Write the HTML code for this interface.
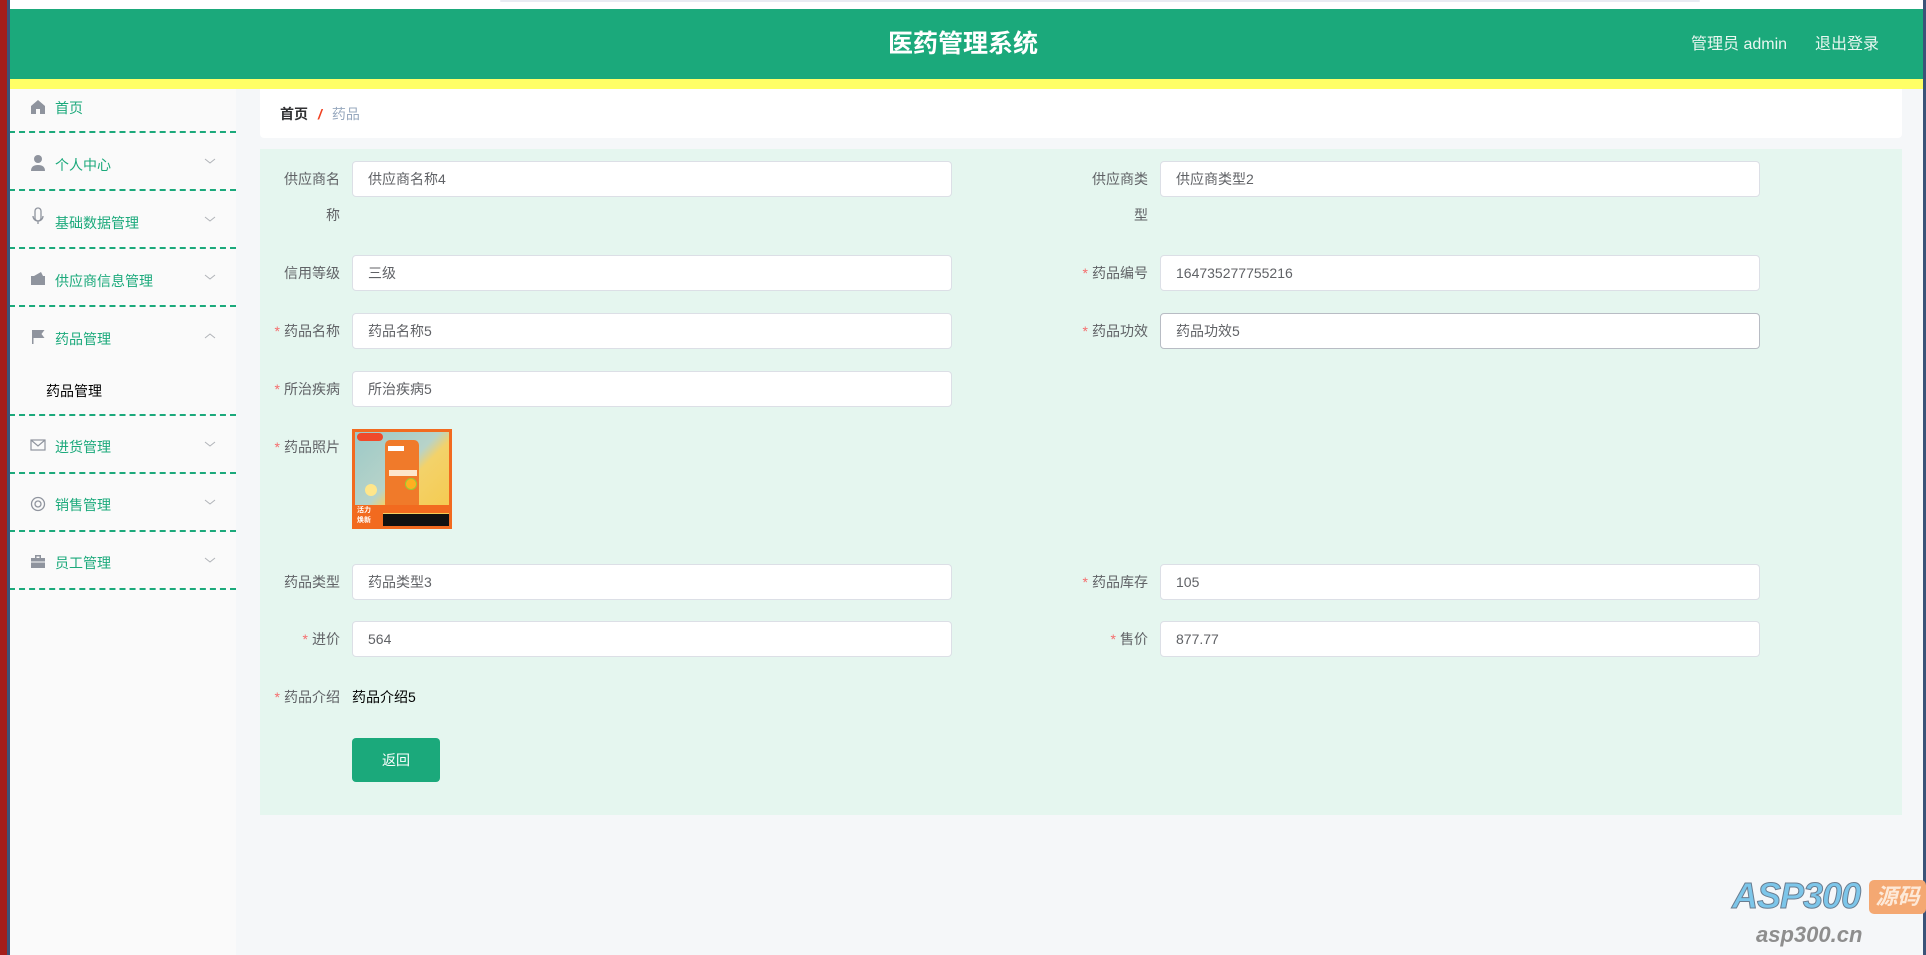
<!DOCTYPE html>
<html><head><meta charset="utf-8"><style>
*{margin:0;padding:0;box-sizing:border-box}
body{width:1926px;height:955px;overflow:hidden;background:#f5f7f9;font-family:"Liberation Sans","Noto Sans CJK SC",sans-serif;position:relative}
.a{position:absolute}
.lab{position:absolute;font-size:14px;color:#606266;text-align:right;width:80px;line-height:36px}
.lab i{color:#f56c6c;font-style:normal;margin-right:4px}
.inp{position:absolute;height:36px;width:600px;background:#fff;border:1px solid #dcdfe6;border-radius:4px;font-size:14px;color:#606266;padding-left:15px;line-height:34px}
.dl{position:absolute;left:9px;width:227px;border-bottom:2px dashed #1ba97b}
.mt{position:absolute;left:55px;font-size:14px;color:#1ba97b}
</style></head><body>
<div class="a" style="left:0;top:0;width:1926px;height:9px;background:#fff"></div>
<div class="a" style="left:500px;top:0;width:1200px;height:2px;background:#e8ebf2;border-radius:2px"></div>
<div class="a" style="left:0;top:9px;width:1926px;height:70px;background:#1ba97b"></div>
<div class="a" style="left:0;top:79px;width:1926px;height:10px;background:#ffff66"></div>
<div class="a" style="left:0;top:31px;width:1926px;text-align:center;color:#fff;font-size:25px;font-weight:bold;line-height:26px">医药管理系统</div>
<div class="a" style="left:1691px;top:35px;color:#eaf7f1;font-size:16px;line-height:20px">管理员 admin</div>
<div class="a" style="left:1815px;top:35px;color:#eaf7f1;font-size:16px;line-height:20px">退出登录</div>

<div class="a" style="left:9px;top:89px;width:227px;height:866px;background:#fafafa"></div>
<div class="dl" style="top:131px"></div>
<div class="dl" style="top:189px"></div>
<div class="dl" style="top:247px"></div>
<div class="dl" style="top:305px"></div>
<div class="dl" style="top:414px"></div>
<div class="dl" style="top:472px"></div>
<div class="dl" style="top:530px"></div>
<div class="dl" style="top:588px"></div>

<div class="mt" style="top:98px">首页</div>
<div class="mt" style="top:155px">个人中心</div>
<div class="mt" style="top:213px">基础数据管理</div>
<div class="mt" style="top:271px">供应商信息管理</div>
<div class="mt" style="top:329px">药品管理</div>
<div class="a" style="left:46px;top:381px;font-size:14px;color:#000">药品管理</div>
<div class="mt" style="top:437px">进货管理</div>
<div class="mt" style="top:495px">销售管理</div>
<div class="mt" style="top:553px">员工管理</div>

<svg class="a" style="left:0;top:0" width="240" height="600">
 <g fill="#8f949e">
  <path d="M31 106l7-6 7 6v8h-5v-5h-4v5h-5z"/>
  <circle cx="38" cy="159" r="4"/><path d="M31 171q0-6 7-6t7 6z"/>
  <path d="M35 211a3 3 0 0 1 6 0v7a3 3 0 0 1-6 0z" fill="none" stroke="#8f949e" stroke-width="1.3"/><path d="M33 216a5 5 0 0 0 10 0M38 221v3" fill="none" stroke="#8f949e" stroke-width="1.3"/>
  <path d="M31 276h14v9h-14z"/><path d="M34 276l7-4 2 4z"/>
  <path d="M32 330h1.5v14H32z"/><path d="M33.5 330h11l-3 4 3 4h-11z"/>
  <rect x="31" y="440" width="14" height="10" fill="none" stroke="#8f949e" stroke-width="1.2"/><path d="M31 440l7 6 7-6" fill="none" stroke="#8f949e" stroke-width="1.2"/>
  <circle cx="38" cy="504" r="6.5" fill="none" stroke="#8f949e" stroke-width="1.3"/><circle cx="38" cy="504" r="3" fill="none" stroke="#8f949e" stroke-width="1.3"/>
  <path d="M31 558h14v10h-14z"/><path d="M35 555h6v3h-1.5v-1.5h-3v1.5H35z"/><path d="M31 562h14" stroke="#fafafa" stroke-width="1"/>
 </g>
 <g fill="none" stroke="#b0b3b8" stroke-width="1">
  <path d="M205 159l5 4 5-4"/><path d="M205 217l5 4 5-4"/><path d="M205 275l5 4 5-4"/>
  <path d="M205 338l5-4 5 4"/><path d="M205 442l5 4 5-4"/><path d="M205 500l5 4 5-4"/><path d="M205 558l5 4 5-4"/>
 </g>
</svg>

<div class="a" style="left:0;top:0;width:7px;height:955px;background:#a51d1a"></div>
<div class="a" style="left:7px;top:0;width:3px;height:955px;background:#3b5378"></div>
<div class="a" style="left:1923px;top:0;width:3px;height:955px;background:#3b5378"></div>

<div class="a" style="left:260px;top:89px;width:1642px;height:49px;background:#fff;border-radius:0 0 4px 4px"></div>
<div class="a" style="left:280px;top:105px;font-size:14px;line-height:18px"><b style="color:#303133">首页</b><span style="color:#f04020;font-weight:bold;margin:0 10px;font-style:italic">/</span><span style="color:#97a8be">药品</span></div>

<div class="a" style="left:260px;top:149px;width:1642px;height:666px;background:#e5f6ef"></div>

<div class="lab" style="left:260px;top:161px;width:80px;padding-left:24px;text-align:right">供应商名称</div>
<div class="inp" style="left:352px;top:161px">供应商名称4</div>
<div class="lab" style="left:1068px;top:161px;width:80px;padding-left:24px">供应商类型</div>
<div class="inp" style="left:1160px;top:161px">供应商类型2</div>

<div class="lab" style="left:260px;top:255px">信用等级</div>
<div class="inp" style="left:352px;top:255px">三级</div>
<div class="lab" style="left:1068px;top:255px"><i>*</i>药品编号</div>
<div class="inp" style="left:1160px;top:255px">164735277755216</div>

<div class="lab" style="left:260px;top:313px"><i>*</i>药品名称</div>
<div class="inp" style="left:352px;top:313px">药品名称5</div>
<div class="lab" style="left:1068px;top:313px"><i>*</i>药品功效</div>
<div class="inp" style="left:1160px;top:313px;border-color:#b8bcc4">药品功效5</div>

<div class="lab" style="left:260px;top:371px"><i>*</i>所治疾病</div>
<div class="inp" style="left:352px;top:371px">所治疾病5</div>

<div class="lab" style="left:260px;top:429px;line-height:36px"><i>*</i>药品照片</div>
<div class="a" style="left:352px;top:429px;width:100px;height:100px;background:linear-gradient(135deg,#9cc9c8 0%,#b7d3c9 45%,#f3d26a 55%,#f6c94a 100%);border:3px solid #f26a1f;overflow:hidden">
 <div class="a" style="left:2px;top:1px;width:26px;height:8px;background:#f04a2a;border-radius:4px"></div>
 <div class="a" style="left:30px;top:8px;width:34px;height:66px;background:#f07a2a;border-radius:5px 5px 2px 2px"></div>
 <div class="a" style="left:33px;top:14px;width:16px;height:5px;background:#fff"></div>
 <div class="a" style="left:34px;top:38px;width:28px;height:6px;background:#fde6cc"></div>
 <div class="a" style="left:50px;top:46px;width:12px;height:12px;border-radius:50%;background:#ffb020;border:1px solid #9c3"></div>
 <div class="a" style="left:10px;top:52px;width:12px;height:12px;border-radius:50%;background:#ffe68a"></div>
 <div class="a" style="left:0;top:73px;width:94px;height:8px;background:#f26a1f"></div>
 <div class="a" style="left:28px;top:82px;width:68px;height:12px;background:#111"></div>
 <div class="a" style="left:0;top:73px;width:28px;height:22px;background:#f26a1f;color:#fff;font-size:7px;line-height:10px;padding:1px 2px;font-weight:bold">活力<br>焕新</div>
</div>

<div class="lab" style="left:260px;top:564px">药品类型</div>
<div class="inp" style="left:352px;top:564px">药品类型3</div>
<div class="lab" style="left:1068px;top:564px"><i>*</i>药品库存</div>
<div class="inp" style="left:1160px;top:564px">105</div>

<div class="lab" style="left:260px;top:621px"><i>*</i>进价</div>
<div class="inp" style="left:352px;top:621px">564</div>
<div class="lab" style="left:1068px;top:621px"><i>*</i>售价</div>
<div class="inp" style="left:1160px;top:621px">877.77</div>

<div class="lab" style="left:260px;top:679px"><i>*</i>药品介绍</div>
<div class="a" style="left:352px;top:679px;line-height:36px;font-size:14px;color:#000">药品介绍5</div>

<div class="a" style="left:352px;top:738px;width:88px;height:44px;background:#1ba97b;border-radius:4px;color:#fff;font-size:14px;text-align:center;line-height:44px">返回</div>

<div class="a" style="left:1732px;top:877px;font-size:36px;font-weight:bold;font-style:italic;color:#7cc6ea;-webkit-text-stroke:1px #6a7d90;line-height:38px;letter-spacing:-1px">ASP300</div>
<div class="a" style="left:1869px;top:880px;width:57px;height:34px;background:#f4a872;border-radius:5px;color:#fde9d8;font-size:22px;font-style:italic;font-weight:bold;line-height:34px;text-align:center">源码</div>
<div class="a" style="left:1756px;top:922px;font-size:22px;font-weight:bold;font-style:italic;color:#8e8e8e;line-height:26px">asp300.cn</div>
</body></html>
